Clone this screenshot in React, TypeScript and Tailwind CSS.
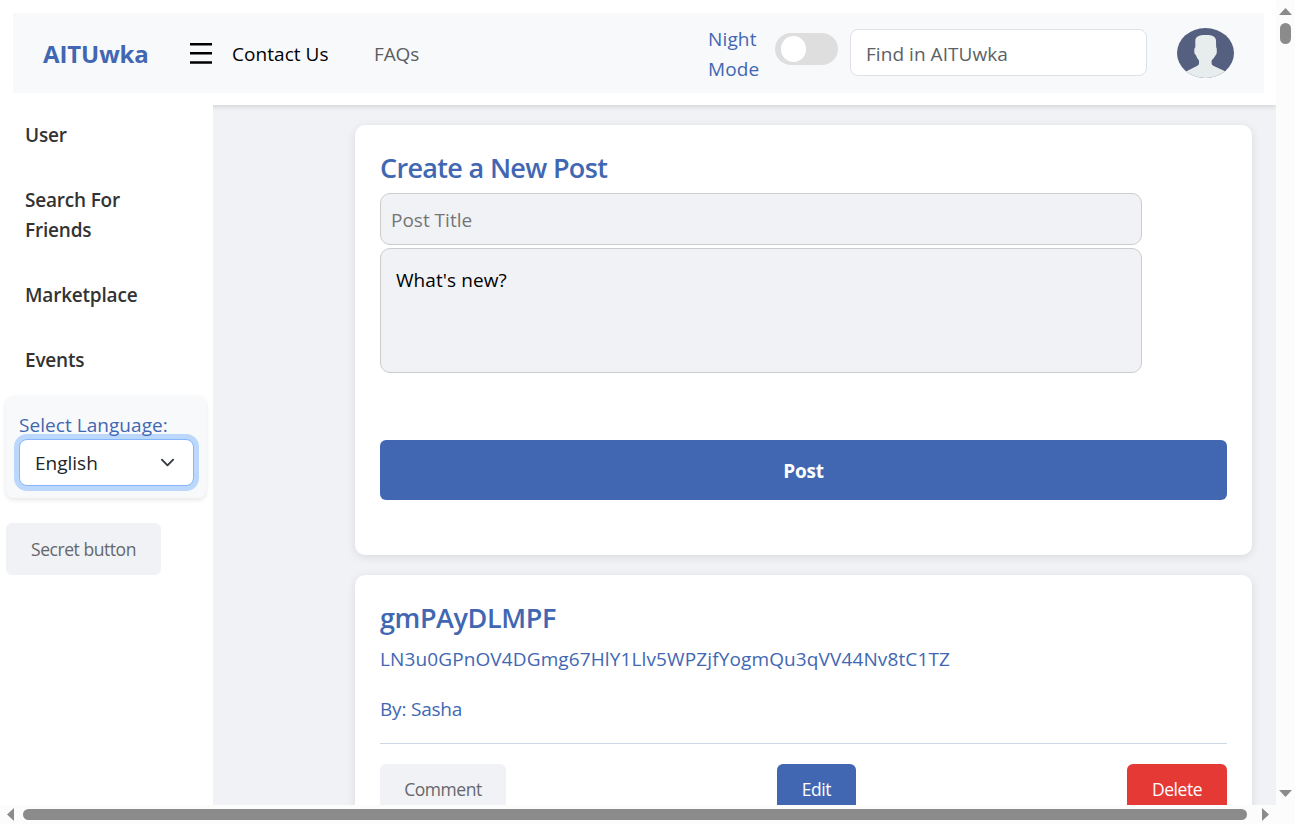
const sidebarLinks = ['User', 'Search For Friends', 'Marketplace', 'Events'];

function Avatar() {
  return (
    <svg className="h-[50px] w-[57px] shrink-0" viewBox="0 0 57 50" preserveAspectRatio="none" aria-hidden="true">
      <defs>
        <clipPath id="avatar-clip">
          <ellipse cx="28.5" cy="25" rx="28.5" ry="25" />
        </clipPath>
      </defs>
      <g clipPath="url(#avatar-clip)">
        <rect width="57" height="50" fill="#556080" />
        <path
          d="M18.3 13 C18.3 8.8 21.500 7 28.700 7 C36 7 39 8.800 39 13 L39.200 19.300 Q39.800 20 39.800 21.500 V24 Q39.800 26.500 38.600 27.200 Q37.500 29.500 34.600 32.500 V35.500 Q34.600 37 36.300 37.800 L46.500 42.500 L51 45 V50 H6 V45 L11 42.500 L20.400 37.800 Q22 37 22 35.500 V32.500 Q19.500 29.500 19 27.200 Q17.300 26.500 17.300 24 V21.500 Q17.300 20 18.300 19.300 Z"
          fill="#e7eced"
        />
      </g>
    </svg>
  );
}

function Header() {
  return (
    <header className="relative z-10 h-[105px] bg-white pl-[13px] pr-3 pt-[13px] shadow-[0_2px_5px_rgba(0,0,0,0.12)]">
      <nav className="flex h-20 items-center bg-[#f8f9fb] pl-[30px] pr-[30px]">
        <a className="w-[147px] pt-0.5 text-[24px] font-bold tracking-[-0.1px] text-[#4267b2]">AITUwka</a>
        <svg className="h-[22px] w-[22px] shrink-0" viewBox="0 0 22 22" aria-hidden="true">
          <path d="M0 2.250H22M0 11.250H22M0 20.500H22" stroke="#000" strokeWidth="2.300" />
        </svg>
        <a className="ml-5 w-[142px] pt-0.5 text-[19px] tracking-[0.05px] text-black">Contact Us</a>
        <a className="pt-0.5 text-[19px] tracking-[-0.1px] text-[#5c5d5f]">FAQs</a>
        <div className="ml-auto flex items-center">
          <span className="w-[67px] pt-0.5 text-[19px] leading-[30px] tracking-[0.15px] text-[#4267b2]">Night Mode</span>
          <button className="mr-3 mb-2 h-8 w-[63px] rounded-full bg-[#dedede] pl-1.5" aria-label="Night mode">
            <span className="block h-[26px] w-[25px] rounded-full bg-white" />
          </button>
          <input
            className="mb-0.5 mr-[30px] h-[47px] w-[297px] rounded-lg border border-[#dee2e6] bg-white px-[15px] pt-1 text-[19px] tracking-[0.05px] outline-none placeholder:text-[#5d6166]"
            placeholder="Find in AITUwka"
          />
          <Avatar />
        </div>
      </nav>
    </header>
  );
}

function Sidebar() {
  return (
    <aside className="relative z-20 h-[700px] w-[213px] shrink-0 bg-white">
      <ul className="flex flex-col gap-[35px] pl-[25px] pt-[15px]">
        {sidebarLinks.map((label) => (
          <li key={label} className="w-[130px] text-[19px] font-semibold leading-[30px] tracking-[-0.2px] text-[#333]">
            {label}
          </li>
        ))}
      </ul>
      <div className="ml-1.5 mt-[21px] h-[102px] w-[200px] rounded-lg bg-[#f8f9fb] pl-[13px] pt-3.5 shadow-[0_2px_5px_rgba(0,0,0,0.1)]">
        <div className="h-[29px] text-[19px] leading-[30px] tracking-[0.05px] text-[#4267b2]">Select Language:</div>
        <div className="flex h-[47px] w-[175px] items-center justify-between rounded-lg border border-[#86b7fe] bg-white pl-[15px] pr-[18px] text-[19px] text-[#212529] shadow-[0_0_0_5px_#bcd7fc]">
          <span className="pt-0.5">English</span>
          <svg className="h-[15px] w-[15px]" viewBox="0 0 16 16" fill="none" stroke="#343a40" strokeWidth="2" strokeLinecap="round" strokeLinejoin="round" aria-hidden="true">
            <path d="m2 5 6 6 6-6" />
          </svg>
        </div>
      </div>
      <button className="ml-1.5 mt-[25px] h-[52px] w-[155px] rounded-md bg-[#f0f2f5] text-[17.500px] tracking-[-0.45px] text-[#65676b]">Secret button</button>
    </aside>
  );
}

function CreatePost() {
  return (
    <section className="h-[430px] shrink-0 rounded-[10px] bg-white px-[25px] pt-[26px] shadow-[0_2px_10px_rgba(0,0,0,0.1)]">
      <h2 className="mb-2 h-[34px] text-[27px] font-semibold leading-[34px] tracking-[-0.67px] text-[#4267b2]">Create a New Post</h2>
      <input
        className="block h-[52px] w-[762px] rounded-[10px] border border-[#ccc] bg-[#f0f2f5] px-2.5 pt-0.5 text-[19px] outline-none placeholder:text-[#757575]"
        placeholder="Post Title"
      />
      <textarea
        className="mt-[3px] block h-[125px] w-[762px] resize-none rounded-[10px] border border-[#ccc] bg-[#f0f2f5] px-[15px] py-4 text-[19px] leading-[30px] tracking-[0.08px] text-black outline-none"
        defaultValue="What's new?"
      />
      <button className="mt-[67px] h-[60px] w-full rounded-md bg-[#4267b2] pt-0.5 text-[19px] font-bold tracking-[-0.2px] text-white">Post</button>
    </section>
  );
}

function Post() {
  return (
    <section className="h-[300px] shrink-0 rounded-[10px] bg-white px-[25px] pt-[26px] shadow-[0_2px_10px_rgba(0,0,0,0.1)]">
      <h2 className="h-[34px] text-[27px] font-semibold leading-[34px] tracking-[-0.4px] text-[#4267b2]">gmPAyDLMPF</h2>
      <p className="mt-[9px] text-[19px] leading-[30px] tracking-[0.12px] text-[#4267b2]">LN3u0GPnOV4DGmg67HlY1Llv5WPZjfYogmQu3qVV44Nv8tC1TZ</p>
      <p className="mt-5 text-[19px] leading-[30px] tracking-[-0.2px] text-[#4267b2]">By: Sasha</p>
      <div className="mt-[19px] flex justify-between border-t border-[#ced7e5] pt-5 text-[17.500px] tracking-[-0.45px]">
        <button className="h-[52px] w-[126px] rounded-md bg-[#f0f2f5] pb-0.5 text-[#65676b]">Comment</button>
        <button className="h-[52px] w-[79px] rounded-md bg-[#4267b2] pb-0.5 text-white">Edit</button>
        <button className="h-[52px] w-[100px] rounded-md bg-[#e53935] pb-0.5 text-white">Delete</button>
      </div>
    </section>
  );
}

function VerticalScrollbar() {
  return (
    <div className="flex h-[805px] w-[19px] shrink-0 flex-col items-center bg-[#fcfcfc] pt-2">
      <svg className="h-[7px] w-[13px]" viewBox="0 0 13 7" aria-hidden="true"><path d="M6.500 0 13 7H0Z" fill="#8b8b8b" /></svg>
      <div className="mt-2 h-[21px] w-[11px] rounded-full bg-[#8b8b8b]" />
      <svg className="mb-2 mt-auto h-[7px] w-[13px]" viewBox="0 0 13 7" aria-hidden="true"><path d="M0 0H13L6.500 7Z" fill="#8b8b8b" /></svg>
    </div>
  );
}

function HorizontalScrollbar() {
  return (
    <div className="flex h-[19px] w-full items-center bg-[#fcfcfc] pl-[7px]">
      <svg className="h-[13px] w-[7px]" viewBox="0 0 7 13" aria-hidden="true"><path d="M7 0V13L0 6.500Z" fill="#8b8b8b" /></svg>
      <div className="ml-[9px] h-[11px] w-[1224px] rounded-full bg-[#8b8b8b]" />
      <svg className="ml-[15px] h-[13px] w-[7px]" viewBox="0 0 7 13" aria-hidden="true"><path d="M0 0 7 6.500 0 13Z" fill="#8b8b8b" /></svg>
    </div>
  );
}

export default function App() {
  return (
    <div className="h-[824px] w-[1295px] overflow-hidden bg-white font-['Open_Sans','Noto_Sans',sans-serif]">
      <div className="flex h-[805px]">
        <div className="h-[805px] w-[1276px] overflow-hidden">
          <Header />
          <div className="flex h-[700px] bg-[#f0f2f5]">
            <Sidebar />
            <main className="ml-[142px] flex w-[897px] flex-col gap-5 pt-5">
              <CreatePost />
              <Post />
            </main>
          </div>
        </div>
        <VerticalScrollbar />
      </div>
      <HorizontalScrollbar />
    </div>
  );
}
